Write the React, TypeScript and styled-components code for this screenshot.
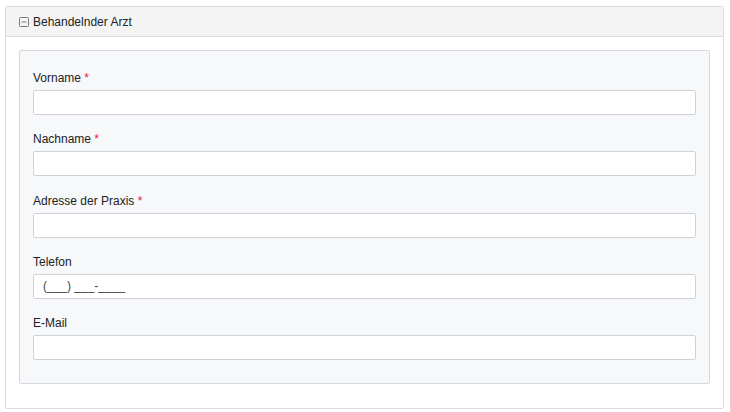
import React from "react";
import styled, { createGlobalStyle } from "styled-components";

const GlobalStyle = createGlobalStyle`
  body {
    margin: 0;
    background: #ffffff;
    font-family: "Liberation Sans", Arial, sans-serif;
    color: #222;
  }
`;

const fields = [
  { label: "Vorname", required: true, value: "" },
  { label: "Nachname", required: true, value: "" },
  { label: "Adresse der Praxis", required: true, value: "" },
  { label: "Telefon", required: false, value: "(___) ___-____" },
  { label: "E-Mail", required: false, value: "" },
];

const App = () => {
  return (
    <>
      <GlobalStyle />
      <Page>
        <Panel>
          <PanelHeader>
            <svg width="10" height="10" viewBox="0 0 10 10">
              <rect x="0.5" y="0.5" width="9" height="9" rx="1" fill="none" stroke="#7a7a7a" />
              <line x1="2.5" y1="5" x2="7.5" y2="5" stroke="#7a7a7a" />
            </svg>
            <span>Behandelnder Arzt</span>
          </PanelHeader>
          <PanelBody>
            <FormBox>
              {fields.map((f) => (
                <FormGroup key={f.label}>
                  <Label>
                    {f.label}
                    {f.required && <Required> *</Required>}
                  </Label>
                  <Input defaultValue={f.value} />
                </FormGroup>
              ))}
            </FormBox>
          </PanelBody>
        </Panel>
      </Page>
    </>
  );
};

export default App;

const Page = styled.div`
  padding: 6px 6px 0 5px;
`;

const Panel = styled.div`
  border: 1px solid #dcdcdc;
  border-radius: 2px;
  background: #fff;
`;

const PanelHeader = styled.div`
  display: flex;
  align-items: center;
  gap: 4px;
  height: 29px;
  padding: 0 13px;
  background: #f4f4f4;
  border-bottom: 1px solid #dcdcdc;
  font-size: 12px;
  color: #222;
`;

const PanelBody = styled.div`
  padding: 13px 13px 24px 13px;
`;

const FormBox = styled.div`
  border: 1px solid #d6d9de;
  border-radius: 2px;
  background: #f7f8fa;
  padding: 19px 13px 7px 13px;
`;

const FormGroup = styled.div`
  margin-bottom: 16.25px;
`;

const Label = styled.div`
  font-size: 12px;
  line-height: 17px;
  margin-bottom: 3px;
  color: #222;
`;

const Required = styled.span`
  color: #e8173c;
`;

const Input = styled.input`
  display: block;
  box-sizing: border-box;
  width: 100%;
  height: 25px;
  padding: 0 9px;
  border: 1px solid #cfd3d9;
  border-radius: 2px;
  background: #fff;
  font-family: "Liberation Sans", Arial, sans-serif;
  font-size: 12px;
  color: #444;
  outline: none;
`;
